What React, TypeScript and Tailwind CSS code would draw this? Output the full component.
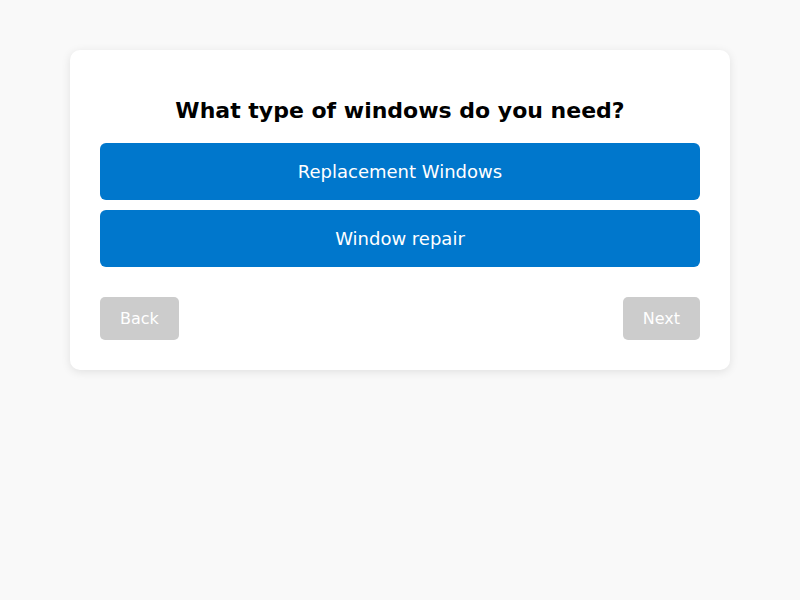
import { useState } from "react";

const options = ["Replacement Windows", "Window repair"];

export default function App() {
  const [selected, setSelected] = useState<string | null>(null);

  return (
    <div
      className="min-h-screen bg-[#f9f9f9] pt-[50px]"
      style={{ fontFamily: '"DejaVu Sans", sans-serif' }}
    >
      <div className="mx-auto w-[660px] rounded-[10px] bg-white px-[30px] pt-[30px] pb-[30px] shadow-[0_2px_10px_rgba(0,0,0,0.1)]">
        <h2 className="mt-[18px] mb-[20px] text-center text-[22px] leading-[25px] font-bold text-black">
          What type of windows do you need?
        </h2>

        <div className="flex flex-col gap-[10px]">
          {options.map((opt) => (
            <button
              key={opt}
              type="button"
              onClick={() => setSelected(opt)}
              className="h-[57px] w-full rounded-[6px] bg-[#0077cc] text-[18px] text-white"
            >
              {opt}
            </button>
          ))}
        </div>

        <div className="mt-[30px] flex items-center justify-between">
          <button
            type="button"
            disabled
            className="h-[43px] rounded-[5px] bg-[#cccccc] px-[20px] text-[16px] text-white"
          >
            Back
          </button>
          <button
            type="button"
            disabled={!selected}
            className="h-[43px] rounded-[5px] bg-[#cccccc] px-[20px] text-[16px] text-white"
          >
            Next
          </button>
        </div>
      </div>
    </div>
  );
}
